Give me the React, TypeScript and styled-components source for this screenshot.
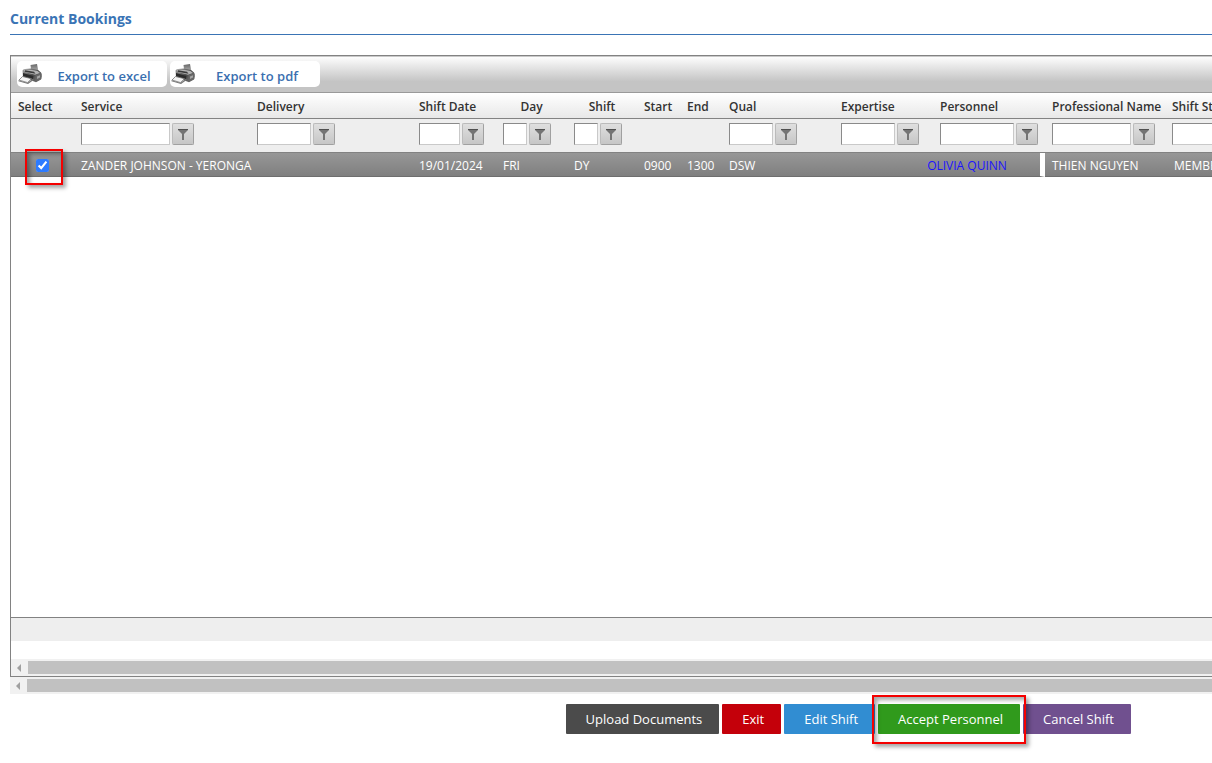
import React from "react";
import styled, { createGlobalStyle, css } from "styled-components";

const Global = createGlobalStyle`
  * { box-sizing: border-box; }
  body {
    margin: 0;
    background: #fff;
    color: #333;
    font-family: "Open Sans", "Noto Sans", sans-serif;
    font-size: 12px;
    overflow-x: hidden;
  }
  button, input { font-family: inherit; }
`;

const Page = styled.main`
  min-height: 100vh;
  display: flex;
  flex-direction: column;
  padding: 0 0 29px 10px;
  overflow: hidden;
`;

const Title = styled.h1`
  margin: 0 0 20px;
  padding: 9px 0 5px;
  border-bottom: 1px solid #3a74b5;
  color: #3a74b5;
  font-size: 14px;
  line-height: 20px;
  font-weight: 700;
`;

const Panel = styled.section`
  flex: 1;
  display: flex;
  flex-direction: column;
  border: 1px solid #828282;
  border-right: 0;
  overflow: hidden;
`;

const Toolbar = styled.div`
  display: flex;
  gap: 3px;
  height: 37px;
  padding: 4px 6px;
  border-top: 1px solid #c9c9c9;
  border-bottom: 1px solid #999;
  background: linear-gradient(#fdfdfd, #c4c4c4 70%, #c4c4c4);
`;

const ExportButton = styled.button`
  display: grid;
  grid-template-columns: 24px 1fr;
  align-items: center;
  width: 150px;
  height: 26px;
  padding: 0 4px 0 1px;
  border: 0;
  border-radius: 5px;
  background: #fff;
  color: #3a6fb0;
  font-size: 13px;
  line-height: 18px;
  font-weight: 600;
  text-align: center;
`;

const ExportLabel = styled.span`
  padding: 4px 0 0 3px;
`;

const Table = styled.table`
  table-layout: fixed;
  width: 1274px;
  border-collapse: separate;
  border-spacing: 0;
`;

const HeadCell = styled.th<{ $center?: boolean }>`
  height: 26px;
  padding: 2px 7px 0;
  border-bottom: 1px solid #828282;
  background: linear-gradient(#fff, #e8e8e8);
  color: #333;
  font-size: 12px;
  line-height: 16px;
  font-weight: 600;
  text-align: ${(p) => (p.$center ? "center" : "left")};
  white-space: nowrap;
`;

const FilterCell = styled.td`
  height: 34px;
  padding: 0 0 4px 7px;
  border-bottom: 1px solid #828282;
  background: #eee;
`;

const FilterGroup = styled.div`
  display: flex;
  gap: 2px;
`;

const FilterInput = styled.input<{ $width: number }>`
  width: ${(p) => p.$width}px;
  height: 22px;
  padding: 2px;
  border: 1px solid;
  border-color: #8a8a8a #c9c9c9 #c9c9c9 #8a8a8a;
  background: #fff;
  font-size: 12px;
`;

const FilterButton = styled.button`
  display: grid;
  place-items: center;
  width: 22px;
  height: 22px;
  padding: 0;
  border: 1px solid #a9a9a9;
  border-radius: 2px;
  border-color: #bbb #a0a0a0 #a0a0a0 #bbb;
  background: linear-gradient(#dfdfdf, #c6c6c6);
`;

const DataCell = styled.td<{ $divider?: boolean; $center?: boolean }>`
  height: 24px;
  padding: 2px 7px 0;
  border-bottom: 1px solid #6e6e6e;
  background: linear-gradient(#979797, #7f7f7f);
  color: #fff;
  font-size: 12px;
  line-height: 18px;
  white-space: nowrap;
  text-align: ${(p) => (p.$center ? "center" : "left")};
  ${(p) =>
    p.$divider &&
    css`
      border-right: 5px solid #fff;
    `}
`;

const CheckBox = styled.input`
  display: block;
  width: 13px;
  height: 13px;
  margin: 0 auto;
  accent-color: #2d7bff;
`;

const PersonLink = styled.a`
  color: #1c14ff;
  text-decoration: none;
`;

const Callout = styled.span`
  position: absolute;
  border: 2px solid #f40000;
  box-shadow: 3px 3px 4px rgba(0, 0, 0, 0.35), inset 3px 3px 4px rgba(0, 0, 0, 0.35);
  pointer-events: none;
  z-index: 1;
`;

const SelectArea = styled.div`
  position: relative;
  ${Callout} {
    left: 7px;
    top: -10px;
    width: 38px;
    height: 36px;
  }
`;

const Rows = styled.div`
  flex: 1;
  min-height: 120px;
`;

const Footer = styled.div`
  height: 24px;
  margin-bottom: 18px;
  border-top: 1px solid #828282;
  background: #eee;
`;

const ScrollTrack = styled.div`
  display: grid;
  grid-template-columns: 17px 1fr;
  flex: none;
  height: 17px;
  background: #f1f1f1;
`;

const ScrollArrow = styled.button`
  display: grid;
  place-items: center;
  padding: 0 2px 0 0;
  border: 0;
  background: transparent;
`;

const ScrollThumb = styled.div`
  margin: 2px 0;
  background: #c1c1c1;
`;

const Actions = styled.div`
  display: flex;
  justify-content: flex-end;
  gap: 3px;
  padding: 10px 81px 0 0;
`;

const ActionButton = styled.button<{ $color: string }>`
  height: 30px;
  padding: 0 17px 0 20px;
  border: 0;
  border-radius: 1px;
  background: ${(p) => p.$color};
  color: #fff;
  font-size: 13px;
  line-height: 18px;
  font-weight: 500;
  white-space: nowrap;
`;

const Highlighted = styled.div`
  position: relative;
  display: flex;
  ${Callout} {
    inset: -9px -6px -10px -6px;
  }
`;

type Column = { label: string; width: number; bodyWidth?: number; filter?: number; center?: boolean };

const columns: Column[] = [
  { label: "Select", width: 63 },
  { label: "Service", width: 176, filter: 89 },
  { label: "Delivery", width: 162, filter: 54 },
  { label: "Shift Date", width: 84, filter: 41 },
  { label: "Day", width: 71, filter: 24, center: true },
  { label: "Shift", width: 70, filter: 24, center: true },
  { label: "Start", width: 43 },
  { label: "End", width: 42 },
  { label: "Qual", width: 112, filter: 44 },
  { label: "Expertise", width: 99, filter: 54, bodyWidth: 60 },
  { label: "Personnel", width: 112, filter: 74, bodyWidth: 151 },
  { label: "Professional Name", width: 120, filter: 79, bodyWidth: 122 },
  { label: "Shift Status", width: 120, filter: 79, bodyWidth: 118 },
];

const booking = [
  "ZANDER JOHNSON - YERONGA",
  "",
  "19/01/2024",
  "FRI",
  "DY",
  "0900",
  "1300",
  "DSW",
  "",
];

const Printer = () => (
  <svg width="24" height="20" viewBox="0 0 24 20" aria-hidden="true">
    <defs>
      <linearGradient id="paper" x1="0" y1="0" x2="0" y2="1">
        <stop offset="0" stopColor="#666" />
        <stop offset="1" stopColor="#c4c4c4" />
      </linearGradient>
      <linearGradient id="case" x1="0" y1="0" x2="1" y2="1">
        <stop offset="0" stopColor="#a8a8a8" />
        <stop offset=".5" stopColor="#4a4a4a" />
        <stop offset="1" stopColor="#777" />
      </linearGradient>
    </defs>
    <path d="M12.500 1l6.500-1 1.500 8-7 1z" fill="url(#paper)" />
    <path d="M4.500 6.500Q5 5 7 5l6-.5 7 1.500 3 2.500q1 1 .8 4l-.8 3-5 2.800-13-5z" fill="url(#case)" />
    <path d="M6 5.500l8 .5 5.500 1 2.500 2-5 1.800-11-3z" fill="#b4b4b4" />
    <path d="M7 6.200l9 1.500 1.500 2-11-2z" fill="#3a3a3a" />
    <path d="M5 9l10.500 3-.5 3-10-3z" fill="#2b2b2b" />
    <path d="M17.500 11l5.500-2 .3 6-5.800 3z" fill="#666" />
    <path d="M19 12.500l3-1.300v2.300l-3 1.500z" fill="#a5a5a5" />
    <path d="M4.500 12.500l9 2.200-4 3.900-8.500-2.600z" fill="#f4f4f4" stroke="#666" strokeWidth=".7" />
    <path d="M.3 16.300l9.200 2.500 5-3.800 1.500.7-6 4.300-9.500-2.800z" fill="#777" />
  </svg>
);

const Funnel = () => (
  <svg width="12" height="12" viewBox="0 0 12 12" aria-hidden="true">
    <path d="M1 1h10v1L7 6v6H5V6L1 2z" fill="#747474" />
    <path d="M1 1h10v1H1z" fill="#505050" />
  </svg>
);

const HorizontalScroll = () => (
  <ScrollTrack>
    <ScrollArrow aria-label="Scroll left">
      <svg width="4" height="8" viewBox="0 0 4 8" aria-hidden="true">
        <path d="M4 0v8L0 4z" fill="#a0a0a0" />
      </svg>
    </ScrollArrow>
    <ScrollThumb />
  </ScrollTrack>
);

const Widths = ({ body }: { body?: boolean }) => (
  <colgroup>
    {columns.map((c) => (
      <col key={c.label} width={(body && c.bodyWidth) || c.width} />
    ))}
  </colgroup>
);

export default function App() {
  return (
    <>
      <Global />
      <Page>
        <Title>Current Bookings</Title>
        <Panel>
          <Toolbar>
            {["Export to excel", "Export to pdf"].map((label) => (
              <ExportButton key={label}>
                <Printer />
                <ExportLabel>{label}</ExportLabel>
              </ExportButton>
            ))}
          </Toolbar>
          <Table>
            <Widths />
            <thead>
              <tr>
                {columns.map((c) => (
                  <HeadCell key={c.label} scope="col" $center={c.center}>
                    {c.label}
                  </HeadCell>
                ))}
              </tr>
              <tr>
                {columns.map((c) => (
                  <FilterCell key={c.label}>
                    {c.filter && (
                      <FilterGroup>
                        <FilterInput $width={c.filter} aria-label={`Filter ${c.label}`} />
                        <FilterButton aria-label={`Filter options for ${c.label}`}>
                          <Funnel />
                        </FilterButton>
                      </FilterGroup>
                    )}
                  </FilterCell>
                ))}
              </tr>
            </thead>
          </Table>
          <Rows>
            <Table>
              <Widths body />
              <tbody>
                <tr>
                  <DataCell>
                    <SelectArea>
                      <CheckBox type="checkbox" defaultChecked aria-label="Select booking" />
                      <Callout />
                    </SelectArea>
                  </DataCell>
                  {booking.map((value, i) => (
                    <DataCell key={i}>{value}</DataCell>
                  ))}
                  <DataCell $divider $center>
                    <PersonLink href="#personnel">OLIVIA QUINN</PersonLink>
                  </DataCell>
                  <DataCell>THIEN NGUYEN</DataCell>
                  <DataCell>MEMBER</DataCell>
                </tr>
              </tbody>
            </Table>
          </Rows>
          <Footer />
          <HorizontalScroll />
        </Panel>
        <HorizontalScroll />
        <Actions>
          <ActionButton $color="#4b4b4b">Upload Documents</ActionButton>
          <ActionButton $color="#c4000a">Exit</ActionButton>
          <ActionButton $color="#318dd2">Edit Shift</ActionButton>
          <Highlighted>
            <ActionButton $color="#309a1c">Accept Personnel</ActionButton>
            <Callout />
          </Highlighted>
          <ActionButton $color="#70508f">Cancel Shift</ActionButton>
        </Actions>
      </Page>
    </>
  );
}
